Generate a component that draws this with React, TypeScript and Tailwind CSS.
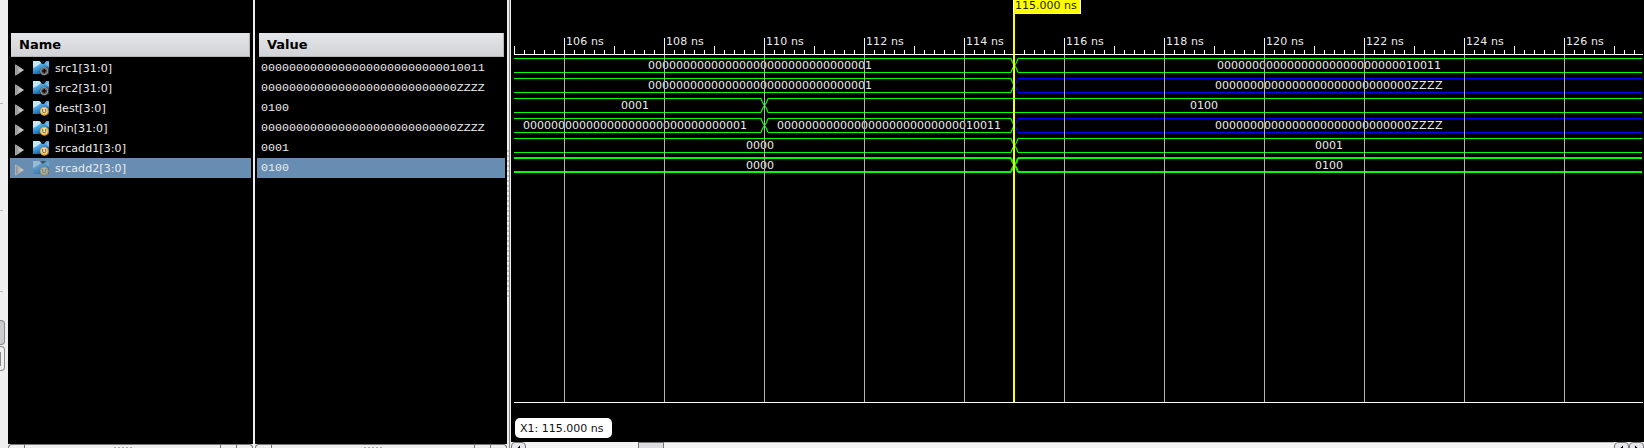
import React from "react";

const names = [
  { name: "src1[31:0]", value: "00000000000000000000000000010011", kind: "signal" },
  { name: "src2[31:0]", value: "0000000000000000000000000000ZZZZ", kind: "signal" },
  { name: "dest[3:0]", value: "0100", kind: "variable" },
  { name: "Din[31:0]", value: "0000000000000000000000000000ZZZZ", kind: "variable" },
  { name: "srcadd1[3:0]", value: "0001", kind: "variable" },
  { name: "srcadd2[3:0]", value: "0100", kind: "variable", selected: true },
];

const GREEN = "#00ff00";
const BLUE = "#0000ff";
const ONE = "00000000000000000000000000000001";
const NINETEEN = "00000000000000000000000000010011";
const HIZ = "0000000000000000000000000000ZZZZ";

type Segment = { from: number; to: number; color: string; text: string; tx: number };
const waves: Segment[][] = [
  [
    { from: 514, to: 1014, color: GREEN, text: ONE, tx: 648 },
    { from: 1014, to: 1642, color: GREEN, text: NINETEEN, tx: 1217 },
  ],
  [
    { from: 514, to: 1014, color: GREEN, text: ONE, tx: 648 },
    { from: 1014, to: 1642, color: BLUE, text: HIZ, tx: 1215 },
  ],
  [
    { from: 514, to: 764, color: GREEN, text: "0001", tx: 621 },
    { from: 764, to: 1642, color: GREEN, text: "0100", tx: 1190 },
  ],
  [
    { from: 514, to: 764, color: GREEN, text: ONE, tx: 523 },
    { from: 764, to: 1014, color: GREEN, text: NINETEEN, tx: 777 },
    { from: 1014, to: 1642, color: BLUE, text: HIZ, tx: 1215 },
  ],
  [
    { from: 514, to: 1014, color: GREEN, text: "0000", tx: 746 },
    { from: 1014, to: 1642, color: GREEN, text: "0001", tx: 1315 },
  ],
  [
    { from: 514, to: 1014, color: GREEN, text: "0000", tx: 746 },
    { from: 1014, to: 1642, color: GREEN, text: "0100", tx: 1315 },
  ],
];

function busEnds(s: Segment, row: number, bold: boolean) {
  const t = 58 + row * 20 + (bold ? 0 : 0.5);
  const b = t + 14;
  const m = t + 7;
  const left = s.from === 514 ? "" : `M${s.from + 4} ${t}L${s.from + 2.5} ${t + 4}L${s.from + 0.5} ${m}L${s.from + 2.5} ${b - 4}L${s.from + 4} ${b}`;
  const right = s.to === 1642 ? "" : `M${s.to - 3} ${t}L${s.to - 1.5} ${t + 4}L${s.to + 0.5} ${m}L${s.to - 1.5} ${b - 4}L${s.to - 3} ${b}`;
  return left + right;
}

function Bus({ s, row }: { s: Segment; row: number }) {
  const bold = row === 5;
  const h = bold ? 2 : 1;
  const top = 58 + row * 20 - (bold ? 1 : 0);
  const l = s.from === 514 ? 514 : s.from + 4;
  const r = s.to === 1642 ? 1642 : s.to - 3;
  const z = s.text.indexOf("Z");
  return (
    <g>
      <rect x={l} y={top} width={r - l} height={h} fill={s.color} shapeRendering="crispEdges" />
      <rect x={l} y={top + 14} width={r - l} height={h} fill={s.color} shapeRendering="crispEdges" />
      <path d={busEnds(s, row, bold)} stroke={s.color} strokeWidth={bold ? 2 : 1.2} fill="none" />
      <text x={s.tx} y={69 + row * 20} fill="#ececec">
        {z < 0 ? s.text : s.text.slice(0, z)}
        {z >= 0 && <tspan letterSpacing="0.5">{s.text.slice(z)}</tspan>}
      </text>
    </g>
  );
}

function BusIcon({ kind, dim }: { kind: string; dim?: boolean }) {
  const variable = kind === "variable";
  return (
    <svg className={dim ? "ml-[9px] shrink-0 opacity-50" : "ml-[9px] shrink-0"} width="16" height="16" viewBox="0 0 16 16">
      <path d="M0 1H7L9 4H11L13 1H16V14H0Z" fill="url(#bus)" />
      <path d="M0 1H6L8 3L4 6L0 8Z" fill="#c4e9fb" />
      <path d="M7 1L10 4L13 1Z" fill="#10151b" />
      <path d="M12 4L16 1V7Z" fill="#6abbe8" />
      <circle cx="11.4" cy="11.3" r="4.6" fill={variable ? "#a5741a" : "#202020"} />
      <circle cx="11.2" cy="11" r="3.7" fill={variable ? "#f0dfae" : "#5c5c5c"} stroke={variable ? "#e8ae2c" : "#a2a2a2"} strokeWidth="0.9" />
      {variable ? (
        <path d="M9.7 9V11.5Q9.7 12.8 11.2 12.8Q12.7 12.8 12.7 11.5V9" stroke="#806018" strokeWidth="1" fill="none" />
      ) : (
        <path d="M11.2 9V13M9.2 11H13.2" stroke="#080808" strokeWidth="1.4" />
      )}
    </svg>
  );
}

function Header({ children }: { children: string }) {
  return (
    <div className="flex h-6 items-center border-r border-b border-[#b6b6ba] bg-linear-to-b/srgb from-[#e5e6ea] to-[#d2d3d7] pl-2 text-[13px] font-bold text-black">
      {children}
    </div>
  );
}

function BottomBar({ wide }: { wide: string }) {
  return (
    <div className="flex h-1 shrink-0 bg-[#efefef]">
      <div className="h-2 w-4 rounded-tl border-t border-l border-[#777]" />
      <div className={wide}>
        <div className="mt-0.5 flex gap-0.5">
          {[0, 1, 2, 3, 4].map((i) => (
            <div key={i} className="h-px w-0.5 bg-[#aaa]" />
          ))}
        </div>
      </div>
      <div className="h-2 w-4 border-t border-r border-[#777]" />
      <div className="h-2 flex-1 rounded-tr border-t border-r border-[#777]" />
    </div>
  );
}

function Waveform() {
  return (
    <svg className="block shrink-0" width="1133" height="442" viewBox="511 0 1133 442" fontFamily="DejaVu Sans, sans-serif" fontSize="11">
      <g shapeRendering="crispEdges">
        <rect x="514" y="54" width="1129" height="1" fill="#fff" />
        {Array.from({ length: 113 }, (_, i) => {
          const h = i % 10 === 5 ? 16 : i % 10 === 0 ? 8 : 4;
          return <rect key={i} x={514 + i * 10} y={54 - h} width="1" height={h} fill="#fff" />;
        })}
      </g>
      {waves.map((row, r) => row.map((s, i) => <Bus key={`${r}-${i}`} s={s} row={r} />))}
      <g shapeRendering="crispEdges">
        {Array.from({ length: 11 }, (_, i) => (
          <rect key={i} x={564 + i * 100} y="55" width="1" height="347" fill="#b4b4b4" />
        ))}
        <rect x="514" y="402" width="1129" height="1" fill="#fff" />
      </g>
      {Array.from({ length: 11 }, (_, i) => (
        <text key={i} x={566 + i * 100} y="45" fill="#ececec" letterSpacing="0.1">{`${106 + i * 2} ns`}</text>
      ))}
      <g shapeRendering="crispEdges">
        <rect x="1013" y="0" width="68" height="14" fill="#fff" />
        <rect x="1014" y="0" width="66" height="13" fill="#ff0" />
        <rect x="1013" y="13" width="2" height="389" fill="#ff0" />
      </g>
      <text x="1015" y="9" fill="#222200">115.000 ns</text>
      <rect x="515" y="418" width="97" height="20" rx="5" fill="#fff" />
      <text x="520" y="432" fill="#111">X1: 115.000 ns</text>
    </svg>
  );
}

function ScrollButton({ flip }: { flip?: boolean }) {
  return (
    <div className="flex h-4 w-[15px] shrink-0 rounded-t-sm border border-[#777] bg-[#e9e9ed]">
      <svg className={flip ? "-scale-x-100" : ""} width="13" height="8" viewBox="0 0 13 8">
        <path d="M8 2.5V8H4.5V6Z" fill="#000" />
      </svg>
    </div>
  );
}

export default function App() {
  return (
    <div className="flex h-[448px] w-[1644px] overflow-hidden bg-black font-['DejaVu_Sans',sans-serif] text-[11px] text-[#ececec]">
      <svg width="0" height="0" className="absolute">
        <linearGradient id="bus" x1="0" y1="0" x2="0.6" y2="1">
          <stop offset="0" stopColor="#9ad8f7" />
          <stop offset="0.6" stopColor="#3795d4" />
          <stop offset="1" stopColor="#0d4f89" />
        </linearGradient>
        <linearGradient id="arrow" x1="0" y1="0" x2="1" y2="0">
          <stop offset="0" stopColor="#8c8c8c" />
          <stop offset="1" stopColor="#e4e4e4" />
        </linearGradient>
      </svg>

      <div className="flex w-2 shrink-0 flex-col bg-[#efefef]">
        <div className="mt-[103px] h-px w-[3px] bg-[#b8b8b8]" />
        <div className="mt-[106px] h-px w-[3px] bg-[#b8b8b8]" />
        <div className="mt-[80px] h-px w-[3px] bg-[#b8b8b8]" />
        <div className="mt-[28px] h-[25px] w-[5px] rounded-r border border-l-0 border-[#888] bg-[#cbccd0]" />
        <div className="mt-px h-[25px] w-[5px] rounded-r border border-l-0 border-[#888] pt-[5px]">
          <div className="h-[14px] w-px bg-[#888]" />
        </div>
      </div>

      <div className="flex w-[245px] shrink-0 flex-col">
        <div className="h-[33px]" />
        <div className="mr-[3px] ml-[3px]"><Header>Name</Header></div>
        <div className="mt-px flex-1">
          {names.map((s) => (
            <div key={s.name} className={s.selected ? "mr-0.5 ml-0.5 flex h-5 items-center bg-[#678db2] pl-[5px]" : "mr-0.5 ml-0.5 flex h-5 items-center pl-[5px]"}>
              <svg className="mt-[3px] shrink-0" width="9" height="12" viewBox="0 0 9 12">
                <path d="M0.5 0.8L8.5 6L0.5 11.2Z" fill="url(#arrow)" stroke="#bbb" strokeWidth="0.8" />
              </svg>
              <BusIcon kind={s.kind} dim={s.selected} />
              <span className="ml-1.5 pt-0.5 tracking-[0.08px]">{s.name}</span>
            </div>
          ))}
        </div>
        <BottomBar wide="flex h-2 w-[197px] justify-center border-x border-t border-[#777]" />
      </div>

      <div className="w-0.5 shrink-0 bg-[#efefef]" />

      <div className="flex w-[252px] shrink-0 flex-col">
        <div className="h-[33px]" />
        <div className="mr-[3px] ml-1"><Header>Value</Header></div>
        <div className="mt-px flex-1">
          {names.map((s) => (
            <div key={s.name} className={s.selected ? "mr-0.5 ml-0.5 flex h-5 items-center bg-[#678db2] pl-1" : "mr-0.5 ml-0.5 flex h-5 items-center pl-1"}>
              <span className="pt-0.5 font-['Liberation_Mono',monospace] text-[11.667px]">{s.value}</span>
            </div>
          ))}
        </div>
        <BottomBar wide="flex h-2 w-[204px] justify-center border-x border-t border-[#777]" />
      </div>

      <div className="flex w-1 shrink-0 bg-[#efefef]">
        <div className="mt-[150px] flex w-0.5 flex-col gap-[3px]">
          {Array.from({ length: 30 }, (_, i) => (
            <div key={i} className="h-0.5 w-0.5 shrink-0 bg-[#c8c8c8]" />
          ))}
        </div>
        <div className="w-px bg-[#888]" />
      </div>

      <div className="flex w-[1133px] shrink-0 flex-col">
        <Waveform />
        <div className="flex h-[6px] overflow-hidden bg-[#f3f3f3]">
          <ScrollButton />
          <div className="ml-[112px] h-4 w-[26px] shrink-0 border border-[#777] bg-[#dcdce1]" />
          <div className="flex-1 border-t border-[#bbb]" />
          <ScrollButton />
          <ScrollButton flip />
        </div>
      </div>
    </div>
  );
}
